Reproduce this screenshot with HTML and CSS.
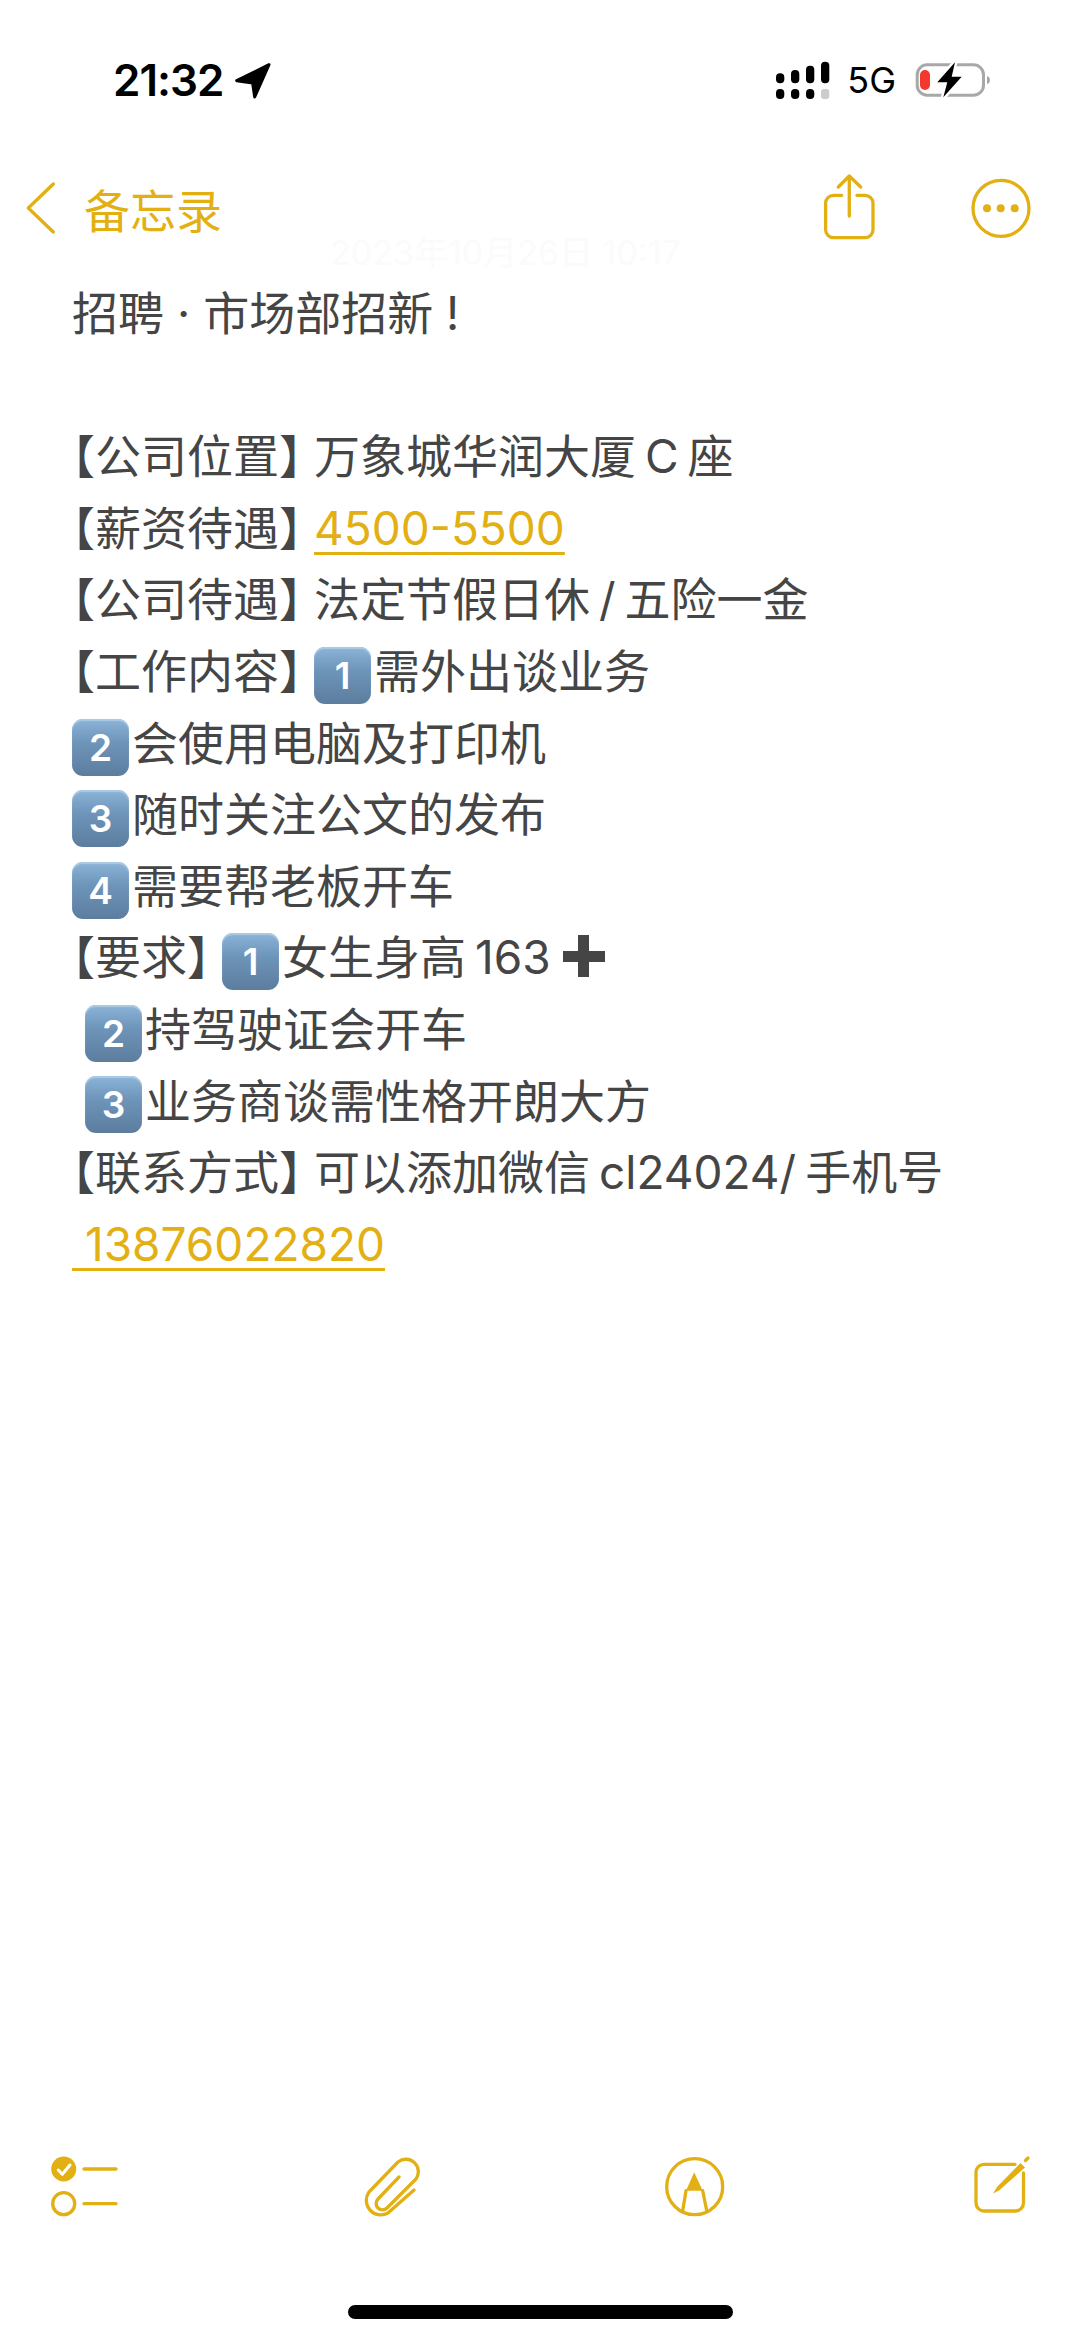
FILE: index.html
```html
<!DOCTYPE html>
<html lang="zh-CN">
<head>
  <meta charset="UTF-8" />
  <meta name="viewport" content="width=device-width, initial-scale=1.0" />
  <title>备忘录</title>
  <link rel="stylesheet" href="styles.css">
</head>
<body>
<div class="screen">

  <div class="status">
    <span class="time">21:32</span>
    <svg class="loc" width="40" height="40" viewBox="0 0 40 40"><path d="M36 4.7 3.7 20.7 19.6 23 21.7 37z" fill="#000" stroke="#000" stroke-width="3" stroke-linejoin="round"/></svg>
    <svg class="signal" width="56" height="40" viewBox="0 0 56 40">
      <rect x="1" y="13.3" width="8.3" height="10" rx="4"/><rect x="16" y="10" width="8.3" height="13.3" rx="4"/><rect x="31" y="5.7" width="8.3" height="17.6" rx="4"/><rect x="46" y="1.7" width="8.3" height="21.6" rx="4"/>
      <rect x="1" y="29" width="8.3" height="10" rx="4"/><rect x="16" y="29" width="8.3" height="10" rx="4"/><rect x="31" y="29" width="8.3" height="10" rx="4"/><rect x="46" y="29" width="8.3" height="10" rx="3" fill="#ccc"/>
    </svg>
    <span class="net">5G</span>
    <svg class="batt" width="78" height="40" viewBox="0 0 78 40">
      <rect x="3.2" y="4.8" width="66.3" height="30.4" rx="10" fill="none" stroke="#a8a8a8" stroke-width="3"/>
      <path d="M73 16q3 1 3 4t-3 4z" fill="#a8a8a8"/>
      <rect x="6" y="10" width="10" height="20" rx="5" fill="#f2382f"/>
      <path d="M41 2.3 23.3 22.3h10L29.3 37.3 47.7 16.7h-10z" fill="#000" stroke="#fff" stroke-width="5" paint-order="stroke"/>
    </svg>
  </div>

  <div class="nav">
    <svg width="36" height="60" viewBox="0 0 36 60"><path d="M29.3 6 4.3 30l25 24" class="ln" stroke-width="5.4"/></svg>
    <span class="nav-title">备忘录</span>
    <span class="stamp">2023年10月26日 10:17</span>
    <div class="nav-right">
      <svg width="60" height="70" viewBox="0 0 60 70"><path class="ln" d="M21.7 22.3H13.6a8 8 0 0 0-8 8V56.700a8 8 0 0 0 8 8H45a8 8 0 0 0 8-8V30.300a8 8 0 0 0-8-8H36.900M29.300 43V3M18.300 14 29.300 3l11.400 11"/></svg>
      <svg width="62" height="70" viewBox="0 0 62 70"><circle class="ln" cx="31" cy="35.300" r="28"/><circle class="dot" cx="17" cy="35.300" r="4"/><circle class="dot" cx="30.700" cy="35.300" r="4"/><circle class="dot" cx="44.700" cy="35.300" r="4"/></svg>
    </div>
  </div>

  <div class="note">
    <p class="line">招聘 · 市场部招新 !</p>
    <p class="line"></p>
    <p class="line"><span class="op">【</span>公司位置<span class="cl">】</span>万象城华润大厦<span class="gap">C</span>座</p>
    <p class="line"><span class="op">【</span>薪资待遇<span class="cl">】</span><a class="link">4500-5500</a></p>
    <p class="line"><span class="op">【</span>公司待遇<span class="cl">】</span>法定节假日休<span class="gap">/</span>五险一金</p>
    <p class="line"><span class="op">【</span>工作内容<span class="cl">】</span><span class="key">1</span>需外出谈业务</p>
    <p class="line"><span class="key">2</span>会使用电脑及打印机</p>
    <p class="line"><span class="key">3</span>随时关注公文的发布</p>
    <p class="line"><span class="key">4</span>需要帮老板开车</p>
    <p class="line"><span class="op">【</span>要求<span class="cl">】</span><span class="key">1</span>女生身高<span class="gap">163</span><span class="plus"></span></p>
    <p class="line indent"><span class="key">2</span>持驾驶证会开车</p>
    <p class="line indent"><span class="key">3</span>业务商谈需性格开朗大方</p>
    <p class="line"><span class="op">【</span>联系方式<span class="cl">】</span>可以添加微信<span class="gap">cl24024/</span>手机号</p>
    <p class="line"><a class="link"> 13876022820</a></p>
  </div>

  <div class="toolbar">
    <svg width="70" height="66" viewBox="0 0 70 66">
      <circle class="dot" cx="15.700" cy="14" r="12.500"/>
      <path d="M10.300 15l4 4.300L22 10" fill="none" stroke="#fff" stroke-width="3" stroke-linecap="round" stroke-linejoin="round"/>
      <circle class="ln" cx="15.700" cy="48.700" r="11"/>
      <path class="ln" stroke-width="4" d="M36 14H68M36 48.700H68"/>
    </svg>
    <svg width="58" height="66" viewBox="0 0 58 66"><path class="ln" d="M52 35 26 58A14.500 14.500 0 0 1 7 37L36 7A12.500 12.500 0 0 1 54 24L25 53A6 6 0 0 1 16 44L37 22"/></svg>
    <svg width="62" height="66" viewBox="0 0 62 66">
      <circle class="ln" cx="30.700" cy="31.700" r="28"/>
      <path class="dot" d="M30.200 17.300 38.700 35.700H22z"/>
      <path class="ln" d="M22 35.700 18.700 55.700M38.700 35.700 42.700 55.700"/>
    </svg>
    <svg width="64" height="66" viewBox="0 0 64 66">
      <path class="ln" d="M45 9.300H14a8 8 0 0 0-8 8V48a8 8 0 0 0 8 8H45.500a8 8 0 0 0 8-8V18"/>
      <path class="dot" d="M23 38.500 27 32 50.500 8 55 12.500 29 35.500z"/>
      <path class="ln" stroke-width="4" d="M55.500 5.500 58 3"/>
    </svg>
  </div>

  <div class="home"></div>

</div>
</body>
</html>
```

FILE: styles.css
```css
* { box-sizing: border-box; }
html, body { margin: 0; padding: 0; background: #fff; }
body { font-family: Inter, "Noto Sans CJK SC", sans-serif; }

.screen { width: 1080px; height: 2341px; display: flex; flex-direction: column; overflow: hidden; }

.ln { fill: none; stroke: #e3b014; stroke-width: 3.3; stroke-linecap: round; stroke-linejoin: round; }
.dot { fill: #e3b014; }

/* status bar */
.status { height: 160px; padding: 0 88px 0 113px; display: flex; align-items: center; flex-shrink: 0; }
.time { font-size: 44px; font-weight: 600; letter-spacing: -1px; color: #000; }
.loc { margin-left: 10px; }
.signal { margin-left: auto; }
.net { font-size: 36px; color: #000; margin: 0 18px 0 16px; }

/* nav */
.nav { height: 96px; padding: 0 48px 0 24px; display: flex; align-items: center; flex-shrink: 0; position: relative; }
.nav-title { margin-left: 24px; font-size: 46px; color: #e3b014; }
.nav-right { margin-left: auto; display: flex; gap: 90px; }
.stamp { position: absolute; left: 330px; top: 66px; font-size: 34px; color: #fbfbfb; white-space: nowrap; }

/* note body */
.note { flex: 1; padding: 22px 0 0 72px; font-size: 46px; color: #454545; }
.line { margin: 0; height: 71.6px; line-height: 71.6px; white-space: pre; }
.indent { padding-left: 13px; }
.link { color: #e3b014; text-decoration: underline; text-decoration-thickness: 3px; text-underline-offset: 7px; }
.op { font-feature-settings: "halt"; }
.cl { font-feature-settings: "halt"; margin-right: 12px; }
.gap { margin: 0 9px; }

.key {
  display: inline-block;
  width: 57px;
  height: 57px;
  margin-right: 3px;
  border-radius: 11px;
  background: linear-gradient(#8db5d8, #6e95ba 40%, #5c7d9e);
  box-shadow: inset 0 2px 1px #a9cbe6;
  color: #fff;
  font-size: 37px;
  font-weight: 600;
  line-height: 57px;
  text-align: center;
  vertical-align: middle;
}

.plus {
  display: inline-block;
  width: 42px;
  height: 42px;
  margin-left: 3px;
  vertical-align: -3px;
  background:
    linear-gradient(#454545, #454545) center / 100% 11px no-repeat,
    linear-gradient(#454545, #454545) center / 11px 100% no-repeat;
  border-radius: 2px;
}

/* bottom */
.toolbar { height: 66px; padding: 0 46px 0 48px; display: flex; justify-content: space-between; flex-shrink: 0; }
.home { width: 385px; height: 14px; margin: 84px auto 22px; background: #000; border-radius: 7px; flex-shrink: 0; }
```
